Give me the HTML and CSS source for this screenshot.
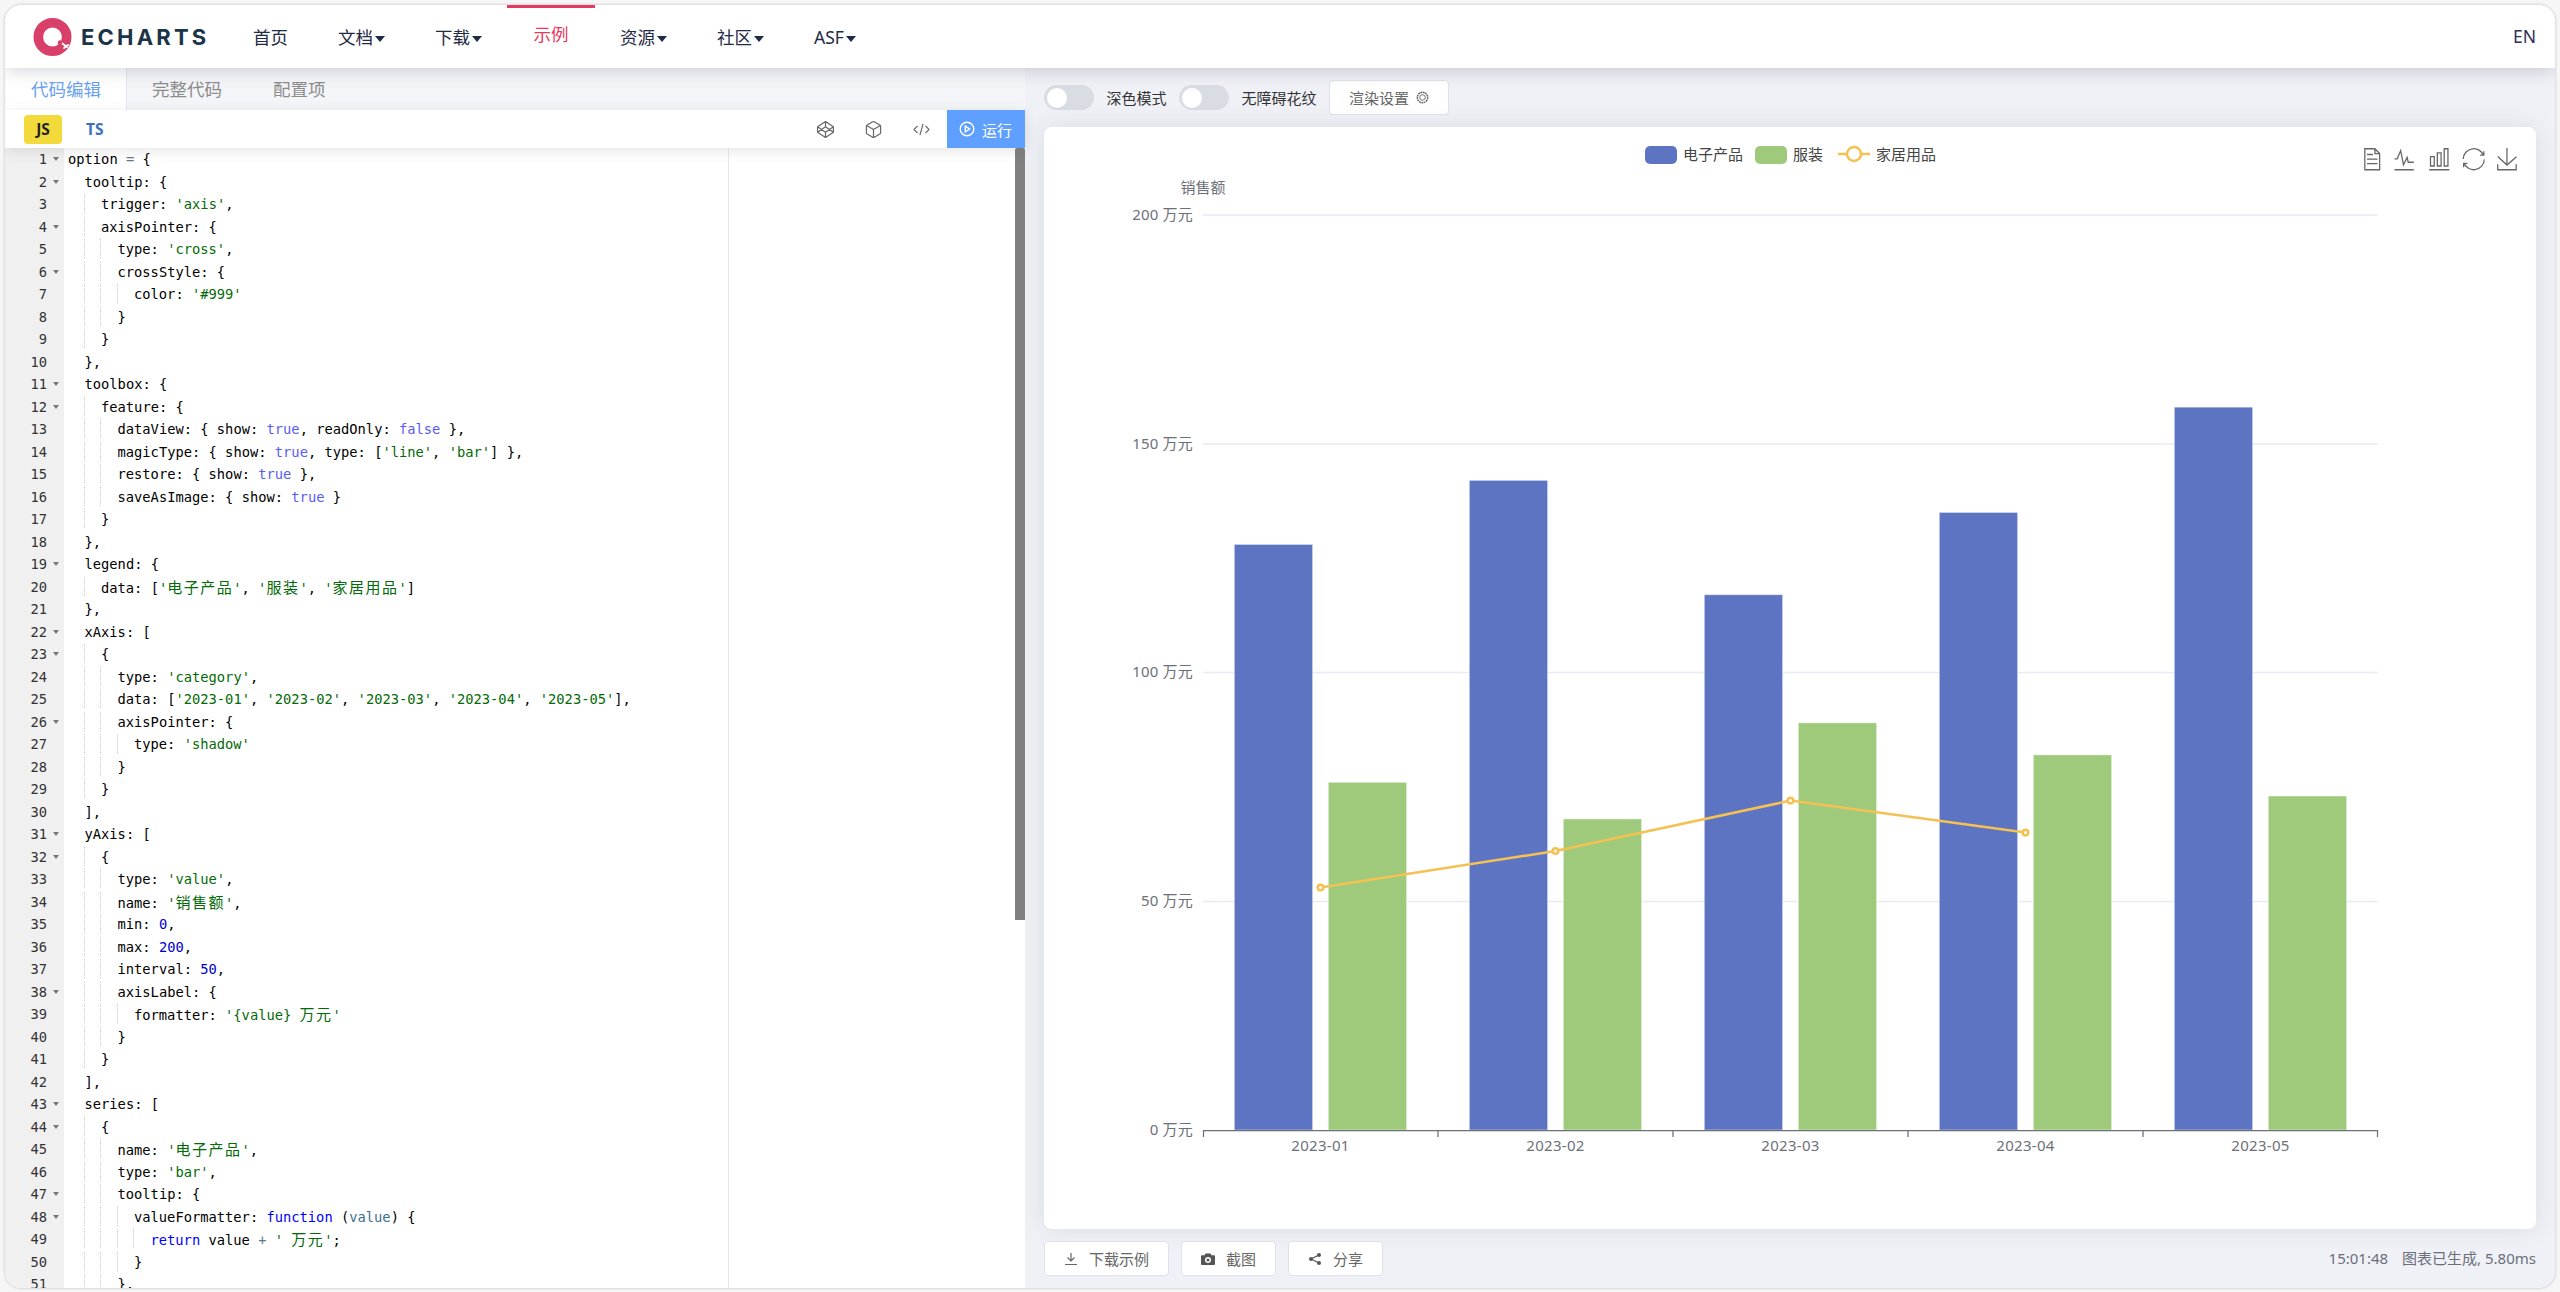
FILE: index.html
```html
<!DOCTYPE html>
<html lang="zh">
<head>
<meta charset="utf-8">
<title>ECharts</title>
<link rel="stylesheet" href="styles.css">
</head>
<body>
<div class="app">
  <header class="nav">
    <a class="logo">
      <svg class="logo-mark" viewBox="0 0 40 40" width="40" height="40" aria-hidden="true">
        <circle class="lm-ring" cx="19.5" cy="20" r="14.2"/>
        <path class="lm-cut" d="M26 24l8 6M31 31l4-3"/>
        <circle class="lm-dot" cx="27" cy="25.5" r="2.2"/>
      </svg>
      <span class="logo-text">ECHARTS</span>
    </a>
    <nav class="menu">
      <a class="mi">首页</a>
      <a class="mi caret">文档</a>
      <a class="mi caret">下载</a>
      <a class="mi active">示例</a>
      <a class="mi caret">资源</a>
      <a class="mi caret">社区</a>
      <a class="mi caret">ASF</a>
    </nav>
    <a class="lang">EN</a>
  </header>
  <main class="main">
    <section class="left">
      <div class="tabs">
        <a class="tab on">代码编辑</a>
        <a class="tab">完整代码</a>
        <a class="tab">配置项</a>
      </div>
      <div class="edbar">
        <span class="js">JS</span>
        <span class="ts">TS</span>
        <span class="edtools">
          <svg class="ti" viewBox="0 0 24 24"><path d="M12 2l10 6.500v7L12 22 2 15.500v-7zM12 22v-6.500M22 8.500l-10 7-10-7M2 15.500l10-7 10 7M12 2v6.500"/></svg>
          <svg class="ti" viewBox="0 0 24 24"><path d="M21 16V8a2 2 0 0 0-1-1.730l-7-4a2 2 0 0 0-2 0l-7 4A2 2 0 0 0 3 8v8a2 2 0 0 0 1 1.730l7 4a2 2 0 0 0 2 0l7-4A2 2 0 0 0 21 16zM3.300 7L12 12l8.700-5M12 22V12"/></svg>
          <svg class="ti" viewBox="0 0 24 24"><path d="M7 7.500L2.500 12 7 16.500M17 7.500l4.500 4.500-4.500 4.500M14 5l-4 14"/></svg>
        </span>
        <a class="run">
          <svg class="runi" viewBox="0 0 16 16"><circle cx="8" cy="8" r="6.800"/><path d="M6.300 5.200l4.300 2.800-4.300 2.800z"/></svg>
          运行
        </a>
      </div>
      <div class="code">
        <div class="margin"></div>
        <div class="thumb"></div>
        <div class="r"><span class="no fold">1</span><span class="t">option <i class="o">=</i> {</span></div>
        <div class="r"><span class="no fold">2</span><span class="t l1">tooltip: {</span></div>
        <div class="r"><span class="no">3</span><span class="t l2">trigger: <i class="s">'axis'</i>,</span></div>
        <div class="r"><span class="no fold">4</span><span class="t l2">axisPointer: {</span></div>
        <div class="r"><span class="no">5</span><span class="t l3">type: <i class="s">'cross'</i>,</span></div>
        <div class="r"><span class="no fold">6</span><span class="t l3">crossStyle: {</span></div>
        <div class="r"><span class="no">7</span><span class="t l4">color: <i class="s">'#999'</i></span></div>
        <div class="r"><span class="no">8</span><span class="t l3">}</span></div>
        <div class="r"><span class="no">9</span><span class="t l2">}</span></div>
        <div class="r"><span class="no">10</span><span class="t l1">},</span></div>
        <div class="r"><span class="no fold">11</span><span class="t l1">toolbox: {</span></div>
        <div class="r"><span class="no fold">12</span><span class="t l2">feature: {</span></div>
        <div class="r"><span class="no">13</span><span class="t l3">dataView: { show: <i class="b">true</i>, readOnly: <i class="b">false</i> },</span></div>
        <div class="r"><span class="no">14</span><span class="t l3">magicType: { show: <i class="b">true</i>, type: [<i class="s">'line'</i>, <i class="s">'bar'</i>] },</span></div>
        <div class="r"><span class="no">15</span><span class="t l3">restore: { show: <i class="b">true</i> },</span></div>
        <div class="r"><span class="no">16</span><span class="t l3">saveAsImage: { show: <i class="b">true</i> }</span></div>
        <div class="r"><span class="no">17</span><span class="t l2">}</span></div>
        <div class="r"><span class="no">18</span><span class="t l1">},</span></div>
        <div class="r"><span class="no fold">19</span><span class="t l1">legend: {</span></div>
        <div class="r"><span class="no">20</span><span class="t l2">data: [<i class="s">'<i class="c">电子产品</i>'</i>, <i class="s">'<i class="c">服装</i>'</i>, <i class="s">'<i class="c">家居用品</i>'</i>]</span></div>
        <div class="r"><span class="no">21</span><span class="t l1">},</span></div>
        <div class="r"><span class="no fold">22</span><span class="t l1">xAxis: [</span></div>
        <div class="r"><span class="no fold">23</span><span class="t l2">{</span></div>
        <div class="r"><span class="no">24</span><span class="t l3">type: <i class="s">'category'</i>,</span></div>
        <div class="r"><span class="no">25</span><span class="t l3">data: [<i class="s">'2023-01'</i>, <i class="s">'2023-02'</i>, <i class="s">'2023-03'</i>, <i class="s">'2023-04'</i>, <i class="s">'2023-05'</i>],</span></div>
        <div class="r"><span class="no fold">26</span><span class="t l3">axisPointer: {</span></div>
        <div class="r"><span class="no">27</span><span class="t l4">type: <i class="s">'shadow'</i></span></div>
        <div class="r"><span class="no">28</span><span class="t l3">}</span></div>
        <div class="r"><span class="no">29</span><span class="t l2">}</span></div>
        <div class="r"><span class="no">30</span><span class="t l1">],</span></div>
        <div class="r"><span class="no fold">31</span><span class="t l1">yAxis: [</span></div>
        <div class="r"><span class="no fold">32</span><span class="t l2">{</span></div>
        <div class="r"><span class="no">33</span><span class="t l3">type: <i class="s">'value'</i>,</span></div>
        <div class="r"><span class="no">34</span><span class="t l3">name: <i class="s">'<i class="c">销售额</i>'</i>,</span></div>
        <div class="r"><span class="no">35</span><span class="t l3">min: <i class="n">0</i>,</span></div>
        <div class="r"><span class="no">36</span><span class="t l3">max: <i class="n">200</i>,</span></div>
        <div class="r"><span class="no">37</span><span class="t l3">interval: <i class="n">50</i>,</span></div>
        <div class="r"><span class="no fold">38</span><span class="t l3">axisLabel: {</span></div>
        <div class="r"><span class="no">39</span><span class="t l4">formatter: <i class="s">'{value} <i class="c">万元</i>'</i></span></div>
        <div class="r"><span class="no">40</span><span class="t l3">}</span></div>
        <div class="r"><span class="no">41</span><span class="t l2">}</span></div>
        <div class="r"><span class="no">42</span><span class="t l1">],</span></div>
        <div class="r"><span class="no fold">43</span><span class="t l1">series: [</span></div>
        <div class="r"><span class="no fold">44</span><span class="t l2">{</span></div>
        <div class="r"><span class="no">45</span><span class="t l3">name: <i class="s">'<i class="c">电子产品</i>'</i>,</span></div>
        <div class="r"><span class="no">46</span><span class="t l3">type: <i class="s">'bar'</i>,</span></div>
        <div class="r"><span class="no fold">47</span><span class="t l3">tooltip: {</span></div>
        <div class="r"><span class="no fold">48</span><span class="t l4">valueFormatter: <i class="k">function</i> (<i class="p">value</i>) {</span></div>
        <div class="r"><span class="no">49</span><span class="t l5"><i class="k">return</i> value <i class="o">+</i> <i class="s">' <i class="c">万元</i>'</i>;</span></div>
        <div class="r"><span class="no">50</span><span class="t l4">}</span></div>
        <div class="r"><span class="no">51</span><span class="t l3">},</span></div>
      </div>
    </section>
    <section class="right">
      <div class="ctrl">
        <span class="sw"><span class="knob"></span></span>
        <span class="swl">深色模式</span>
        <span class="sw"><span class="knob"></span></span>
        <span class="swl">无障碍花纹</span>
        <a class="btn btn-set">渲染设置
          <svg class="gear" viewBox="0 0 14 14"><circle class="gear-o" cx="7" cy="7" r="5.600"/><circle cx="7" cy="7" r="3"/></svg>
        </a>
      </div>
      <div class="card">
        <svg class="chart" viewBox="1044 127 1492 1102" aria-label="chart">
          <g class="grid">
            <path d="M1203 215H2378M1203 444H2378M1203 672.500H2378M1203 901.500H2378"/>
          </g>
          <g class="blue">
            <rect x="1234.300" y="544.400" width="78.330" height="585.600"/>
            <rect x="1469.300" y="480.350" width="78.330" height="649.650"/>
            <rect x="1704.300" y="594.700" width="78.330" height="535.300"/>
            <rect x="1939.300" y="512.400" width="78.330" height="617.600"/>
            <rect x="2174.300" y="407.150" width="78.330" height="722.850"/>
          </g>
          <g class="green">
            <rect x="1328.300" y="782.300" width="78.330" height="347.700"/>
            <rect x="1563.300" y="818.900" width="78.330" height="311.100"/>
            <rect x="1798.300" y="722.800" width="78.330" height="407.200"/>
            <rect x="2033.300" y="754.850" width="78.330" height="375.150"/>
            <rect x="2268.300" y="796" width="78.330" height="334"/>
          </g>
          <path class="axis" d="M1203 1130.500H2378M1203.500 1130v7M1438 1130v7M1673 1130v7M1908 1130v7M2143 1130v7M2377.500 1130v7"/>
          <polyline class="ln" points="1320.500,887.500 1555.500,851 1790.500,800.600 2025.500,832.600"/>
          <g class="pt">
            <circle cx="1320.500" cy="887.500" r="2.800"/>
            <circle cx="1555.500" cy="851" r="2.800"/>
            <circle cx="1790.500" cy="800.600" r="2.800"/>
            <circle cx="2025.500" cy="832.600" r="2.800"/>
          </g>
          <g class="yl">
            <text x="1193" y="213.500">200 万元</text>
            <text x="1193" y="442.500">150 万元</text>
            <text x="1193" y="670.500">100 万元</text>
            <text x="1193" y="899.500">50 万元</text>
            <text x="1193" y="1128.500">0 万元</text>
          </g>
          <text class="yn" x="1203" y="186.500">销售额</text>
          <g class="xl">
            <text x="1320.500" y="1145">2023-01</text>
            <text x="1555.500" y="1145">2023-02</text>
            <text x="1790.500" y="1145">2023-03</text>
            <text x="2025.500" y="1145">2023-04</text>
            <text x="2260.500" y="1145">2023-05</text>
          </g>
          <rect class="lg-b" x="1645" y="146" width="32" height="18" rx="5"/>
          <text class="lg" x="1683" y="153.500">电子产品</text>
          <rect class="lg-g" x="1755" y="146" width="32" height="18" rx="5"/>
          <text class="lg" x="1793" y="153.500">服装</text>
          <path class="lg-l" d="M1838 154h32"/>
          <circle class="lg-c" cx="1854" cy="154" r="7"/>
          <text class="lg" x="1876" y="153.500">家居用品</text>
          <g class="tb">
            <g transform="translate(2360.500 148) scale(.375)"><path d="M17.500 17.300H33M45.400 29.500h-28M11.500 2v56H51V14.800L38.400 2H11.500zM38.400 2.200v12.700H51M45.400 41.700h-28"/></g>
            <g transform="translate(2393 148) scale(.375)"><path d="M4.100 28.900h7.100l9.300-22 7.400 38 9.700-19.700 3 12.800h14.900M4.100 58h51.400"/></g>
            <g transform="translate(2428 148) scale(.375)"><path d="M6.700 22.900h10V48h-10V22.900zM24.900 13h10v35h-10V13zM43.200 2h10v46h-10V2zM3.100 58h53.700"/></g>
            <g transform="translate(2462.500 148) scale(.375)"><path d="M47 18.900h9.800V8.700M56.300 20.100C52.100 9 40.500.6 26.800 2.100 12.600 3.700 1.600 16.200 2.100 29.600M13 41.100H3.100v10.200M3.700 39.800c4.200 11.100 15.800 19.500 29.500 18 14.200-1.600 25.200-14.100 24.700-27.500"/></g>
            <g transform="translate(2496 148) scale(.375)"><path d="M4.700 22.900l24.600 22.600 25.400-22.100M4.600 43.600V58h49.200V43.600M29.200 45.100V0"/></g>
          </g>
        </svg>
      </div>
      <div class="foot">
        <a class="btn">
          <svg class="bi" viewBox="0 0 14 14"><path class="bi-l" d="M7 1v7.500M3.500 5.500L7 9l3.500-3.500M1 12.500h12"/></svg>
          下载示例</a>
        <a class="btn">
          <svg class="bi" viewBox="0 0 14 14"><path class="bi-f" fill-rule="evenodd" d="M4.500 1.500h5l1 1.800H13a1 1 0 0 1 1 1V12a1 1 0 0 1-1 1H1a1 1 0 0 1-1-1V4.300a1 1 0 0 1 1-1h2.500zM7 5a3 3 0 1 0 0 6 3 3 0 0 0 0-6zm0 1.500a1.500 1.500 0 1 1 0 3 1.500 1.500 0 0 1 0-3z"/></svg>
          截图</a>
        <a class="btn">
          <svg class="bi" viewBox="0 0 14 14"><path class="bi-s" d="M11 3L3 7l8 4"/><circle class="bi-f" cx="11" cy="3" r="2"/><circle class="bi-f" cx="3" cy="7" r="2"/><circle class="bi-f" cx="11" cy="11" r="2"/></svg>
          分享</a>
        <span class="status"><span class="time">15:01:48</span>图表已生成, 5.80ms</span>
      </div>
    </section>
  </main>
</div>
</body>
</html>
```
FILE: styles.css
```css
* { box-sizing: border-box; }
html, body { margin: 0; height: 100%; background: #f6f6f6; overflow: hidden; }
body { padding: 5px 5px 4px; font-family: "Noto Sans", "Noto Sans CJK SC", sans-serif; font-size: 15px; }
a { text-decoration: none; }
i { font-style: normal; }

.app { height: 100%; display: flex; flex-direction: column; border-radius: 16px; overflow: hidden; background: #eff1f6; box-shadow: 0 0 3px rgba(0,0,0,.25); }

/* header */
.nav { flex: 0 0 63px; background: #fff; display: flex; align-items: stretch; padding: 0 19px 0 29px; box-shadow: 0 1px 18px rgba(30,35,60,.22); position: relative; z-index: 3; }
.logo { display: flex; align-items: center; width: 194px; }
.logo-mark { flex: none; margin-left: -1px; }
.lm-ring { fill: none; stroke: #d8406a; stroke-width: 9.6; }
.lm-cut { fill: none; stroke: #fff; stroke-width: 2; stroke-linecap: round; }
.lm-dot { fill: #d8406a; }
.logo-text { font-family: Inter, sans-serif; font-weight: 700; font-size: 22px; line-height: 26px; letter-spacing: 3.2px; color: #1b3448; margin-left: 8px; }
.menu { display: flex; align-items: stretch; }
.mi { display: flex; align-items: center; padding: 0 25px 2px; font-size: 17.5px; line-height: 26px; color: #1f2a44; border-top: 3px solid transparent; }
.mi.caret::after { content: ""; width: 0; height: 0; margin-left: 2px; margin-top: 3px; border: 5px solid transparent; border-top: 6px solid #1f2a44; border-bottom: 0; }
.mi.active { color: #e43961; border-top-color: #e43961; padding: 0 26.5px 8px; }
.lang { margin-left: auto; align-self: center; font-size: 17.5px; line-height: 26px; color: #2a3158; padding-bottom: 2px; }

/* layout */
.main { flex: 1; display: flex; min-height: 0; }
.left { flex: 0 0 1020px; display: flex; flex-direction: column; background: #fff; position: relative; z-index: 1; }
.right { flex: 1; display: flex; flex-direction: column; padding: 0 19px; min-width: 0; }

/* tabs */
.tabs { flex: 0 0 42px; display: flex; background: #f4f5f9; }
.tab { padding: 0 26px; font-size: 17.5px; line-height: 42px; color: #8c8c8c; }
.tab.on { background: #fff; color: #6a9ff2; padding: 0 25px 0 26px; border-right: 1px solid #e6e7ec; }
.tab.on + .tab { padding: 0 25px; }

/* editor bar */
.edbar { flex: 0 0 38px; display: flex; align-items: center; background: #fff; padding-left: 19px; box-shadow: 0 3px 14px rgba(0,0,0,.1); position: relative; z-index: 2; }
.js { width: 38px; height: 29px; background: #f2da3b; border-radius: 4px; font-weight: 700; font-size: 15.5px; line-height: 29px; text-align: center; color: #222; }
.ts { margin-left: 24px; font-weight: 700; font-size: 15.5px; color: #3d6fbb; }
.edtools { margin-left: auto; display: flex; gap: 29px; margin-right: 16px; }
.ti { width: 19px; height: 19px; fill: none; stroke: #666; stroke-width: 1.5; stroke-linejoin: round; }
.run { width: 78px; height: 38px; background: #5f9fff; color: #fff; display: flex; align-items: center; padding-left: 12px; gap: 7px; font-size: 15px; }
.runi { width: 16px; height: 16px; fill: none; stroke: #fff; stroke-width: 1.4; }

/* code */
.code { flex: 1; overflow: hidden; position: relative; font-family: "DejaVu Sans Mono", "Noto Sans CJK SC", monospace; font-size: 13.75px; line-height: 22.5px; color: #000; background: linear-gradient(90deg, #f0f0f0 59px, #fff 59px); }
.margin { position: absolute; left: 723px; top: 0; bottom: 0; width: 1px; background: #e8e8e8; }
.thumb { position: absolute; right: 0; top: 0; width: 10px; height: 772px; background: #808080; border-radius: 2px 2px 0 0; z-index: 1; }
.r { display: flex; height: 22.5px; position: relative; }
.no { flex: 0 0 59px; padding-right: 17px; text-align: right; color: #333; position: relative; }
.no.fold::after { content: ""; position: absolute; left: 48px; top: 9px; border: 3px solid transparent; border-top: 4px solid #777; border-bottom: 0; }
.t { flex: 1; padding-left: 4px; white-space: pre; position: relative; }
.t::before { content: ""; position: absolute; top: 1px; bottom: 2px; left: 19.5px; width: 0; background: repeating-linear-gradient(90deg, #c8c8c8 0 1px, transparent 1px 16.5px); -webkit-mask-image: repeating-linear-gradient(180deg, #000 0 1px, transparent 1px 2px); mask-image: repeating-linear-gradient(180deg, #000 0 1px, transparent 1px 2px); }
.l1 { padding-left: 20.5px; }
.l2 { padding-left: 37px; }
.l3 { padding-left: 53.5px; }
.l4 { padding-left: 70px; }
.l5 { padding-left: 86.5px; }
.l2::before { width: 1px; }
.l3::before { width: 17.5px; }
.l4::before { width: 34px; }
.l5::before { width: 50.5px; }
.s { color: #036a07; }
.b { color: #585cf6; }
.n { color: #0000cd; }
.k { color: #0000ff; }
.o { color: #687687; }
.p { color: #3c6e8f; }
.c { font-family: "Noto Sans CJK SC", sans-serif; font-size: 15px; letter-spacing: 1.5px; }

/* right toolbar */
.ctrl { flex: 0 0 59px; display: flex; align-items: center; gap: 12.5px; }
.sw { width: 50px; height: 25px; border-radius: 13px; background: #d9dce3; padding: 2.5px; flex: none; }
.knob { display: block; width: 20px; height: 20px; border-radius: 50%; background: #fff; }
.swl { font-size: 15px; line-height: 22px; color: #333; }
.btn { display: inline-flex; align-items: center; height: 35px; padding: 0 18.5px 0 19px; background: #fff; border: 1px solid #dfe2ea; border-radius: 4px; font-size: 15px; color: #666; gap: 11px; }
.btn-set { gap: 7px; padding: 0 19px; }
.gear { width: 13px; height: 13px; fill: none; stroke: #666; stroke-width: 1; }
.gear-o { stroke-dasharray: 2 .6; stroke-width: 1.6; }

/* chart */
.card { flex: 1; background: #fff; border-radius: 8px; box-shadow: 0 0 24px rgba(40,45,80,.1); overflow: hidden; min-height: 0; }
.chart { display: block; width: 100%; height: 100%; font-family: "Noto Sans", "Noto Sans CJK SC", sans-serif; font-size: 15px; }
.grid path { fill: none; stroke: #e8ebf3; stroke-width: 1.5; }
.blue rect { fill: #5d74c2; stroke: #fff; stroke-opacity: .45; stroke-width: 1; }
.green rect { fill: #9fca7c; stroke: #fff; stroke-opacity: .45; stroke-width: 1; }
.axis { fill: none; stroke: #6e7079; stroke-width: 1.25; }
.ln { fill: none; stroke: #f4c152; stroke-width: 2.5; }
.pt circle { fill: #fff; stroke: #f4c152; stroke-width: 2.5; }
.yl text { fill: #6e7079; text-anchor: end; dominant-baseline: central; letter-spacing: .2px; }
.yn { fill: #6e7079; text-anchor: middle; dominant-baseline: central; }
.xl text { fill: #6e7079; text-anchor: middle; dominant-baseline: central; letter-spacing: .3px; }
.lg { fill: #444; dominant-baseline: central; }
.lg-b { fill: #5d74c2; }
.lg-g { fill: #9fca7c; }
.lg-l { fill: none; stroke: #f4c152; stroke-width: 2.5; }
.lg-c { fill: #fff; stroke: #f4c152; stroke-width: 2.5; }
.tb path { fill: none; stroke: #666; stroke-width: 3.4; }

/* footer */
.foot { flex: 0 0 59px; display: flex; align-items: flex-start; padding-top: 12px; gap: 12.5px; }
.bi { width: 14px; height: 14px; flex: none; }
.bi-l { fill: none; stroke: #666; stroke-width: 1.2; }
.bi-f { fill: #555; }
.bi-s { fill: none; stroke: #555; stroke-width: 1.2; }
.status { margin-left: auto; line-height: 35px; font-size: 15px; color: #6b6f7a; }
.time { margin-right: 14px; }
```
